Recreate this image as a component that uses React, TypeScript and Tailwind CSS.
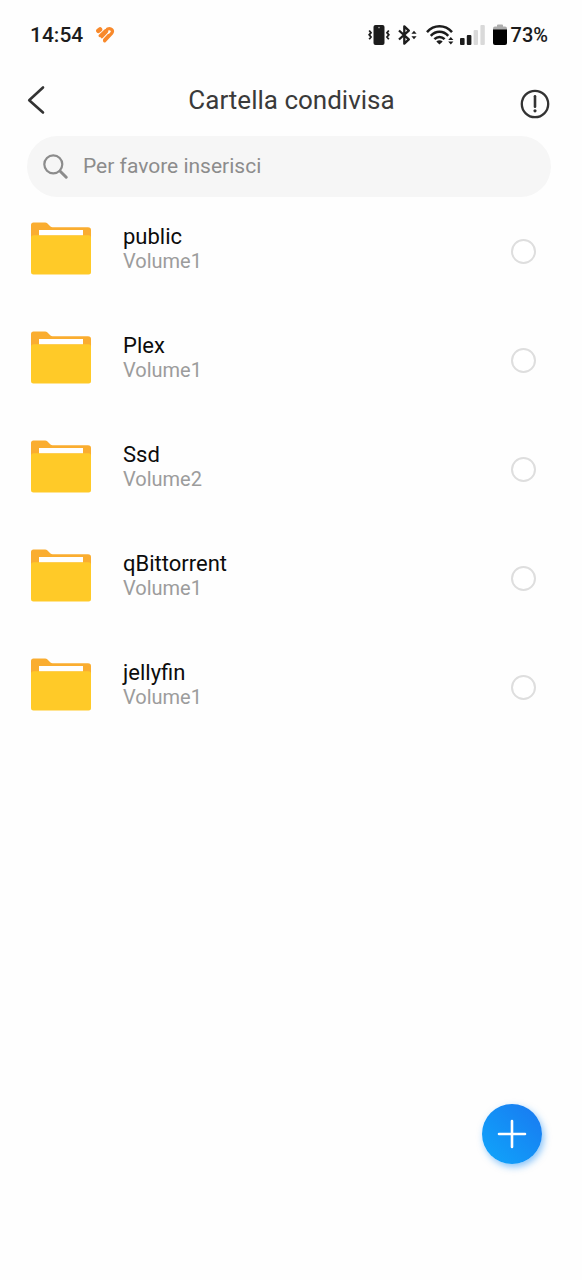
import React, { useState } from 'react';

interface SharedFolder {
  name: string;
  volume: string;
}

const FOLDERS: SharedFolder[] = [
  { name: 'public', volume: 'Volume1' },
  { name: 'Plex', volume: 'Volume1' },
  { name: 'Ssd', volume: 'Volume2' },
  { name: 'qBittorrent', volume: 'Volume1' },
  { name: 'jellyfin', volume: 'Volume1' },
];

const HeartIcon = () => (
  <svg className="w-5 h-4" viewBox="0 0 20 16" fill="none" stroke="#f8892b" strokeLinecap="round" strokeLinejoin="round">
    <path d="M3.4 3.8 L5 2.5" strokeWidth="4.6" />
    <path d="M4.8 8.8 L10.4 3.4 C11.4 2.6 12.6 3.8 11.8 4.8 L6.8 10" strokeWidth="2.6" />
    <path d="M12.6 2 C16.2 0.8 18.8 3.6 16.6 6.4 L9.6 13.8" strokeWidth="3.2" />
    <path d="M9.4 12.6 L13.6 8.2" strokeWidth="2.6" />
  </svg>
);

const VibrateIcon = () => (
  <svg className="w-[22px] h-5" viewBox="0 0 22 20" fill="none">
    <rect x="5.5" y="0" width="11" height="20" rx="2" fill="#1c1c1c" />
    <circle cx="11" cy="2.6" r="0.8" fill="#aaa" />
    <path d="M1.2 5.5 L3 7.7 L1.2 9.8 L3 12 L1.2 14.2 M20.8 5.5 L19 7.7 L20.8 9.8 L19 12 L20.8 14.2" stroke="#1c1c1c" strokeWidth="1.8" />
  </svg>
);

const BluetoothIcon = () => (
  <svg className="w-5 h-5" viewBox="0 0 20 20" fill="none">
    <path d="M1 5.5 L10.8 14.4 L6.3 18.6 V1.4 L10.8 5.6 L1 14.5" stroke="#1c1c1c" strokeWidth="2.3" strokeLinejoin="round" />
    <path d="M13.4 8.8 L16 5.8 L18.6 8.8 Z M13.4 11.2 H18.6 L16 14.2 Z" fill="#1c1c1c" />
  </svg>
);

const WifiIcon = () => (
  <svg className="w-7 h-5" viewBox="0 0 28 20" fill="none" stroke="#1c1c1c" strokeWidth="2.5">
    <path d="M1 7.2 C8 -0.6 19 -0.6 26 7.2" />
    <path d="M4.8 10.8 C9.8 5.4 17.2 5.4 22.2 10.8" />
    <path d="M8.4 14.2 C11.4 11.1 15.6 11.1 18.6 14.2" />
    <path d="M10.3 16.6 C12.2 14.8 14.8 14.8 16.7 16.6 L13.5 19.6 Z" fill="#1c1c1c" stroke="none" />
    <path d="M22.2 15 L24.8 12 L27.4 15 Z M22.2 16.6 H27.4 L24.8 19.6 Z" fill="#1c1c1c" stroke="none" />
  </svg>
);

const SignalIcon = () => (
  <svg className="w-[25px] h-5" viewBox="0 0 25 20">
    <rect x="0" y="13" width="4.6" height="7" rx="1" fill="#1c1c1c" />
    <rect x="6.8" y="10" width="4.6" height="10" rx="1" fill="#1c1c1c" />
    <rect x="13.6" y="5" width="4.4" height="15" rx="1" fill="#d9d9d9" />
    <rect x="20.4" y="0" width="4.4" height="20" rx="1" fill="#d9d9d9" />
  </svg>
);

const BatteryIcon = () => (
  <svg className="w-[14px] h-[22px]" viewBox="0 0 14 22">
    <path d="M4 2.5 V1.5 Q4 0.5 5 0.5 H9 Q10 0.5 10 1.5 V2.5 H12 Q14 2.5 14 4.5 V6 H0 V4.5 Q0 2.5 2 2.5 Z" fill="#adadad" />
    <path d="M0 5.5 H14 V19 Q14 21 12 21 H2 Q0 21 0 19 Z" fill="#000" />
  </svg>
);

const FolderIcon = () => (
  <svg className="w-[60px] h-[53px] shrink-0" viewBox="0 0 60 53">
    <path d="M0 3 Q0 0.5 2.5 0.5 H14 Q15.5 0.5 16.5 1.5 L19.5 4.5 Q20.3 5.2 21.5 5.2 H57 Q60 5.2 60 8 V30 H0 Z" fill="#faad30" />
    <path d="M0 16 Q0 13.2 2.5 13.2 H57.5 Q60 13.2 60 16 V50 Q60 52.5 57.5 52.5 H2.5 Q0 52.5 0 50 Z" fill="#ffca28" />
    <rect x="8" y="8" width="44" height="5.2" fill="#fff" />
  </svg>
);

const StatusBar = () => (
  <div className="flex items-center h-[70px] pl-[30px] pr-[34px] text-[#1c1c1c]">
    <span className="text-[21px] leading-6 font-medium">14:54</span>
    <div className="ml-3">
      <HeartIcon />
    </div>
    <div className="flex items-center ml-auto">
      <VibrateIcon />
      <div className="ml-2"><BluetoothIcon /></div>
      <div className="ml-2"><WifiIcon /></div>
      <div className="ml-1.5"><SignalIcon /></div>
      <div className="ml-2"><BatteryIcon /></div>
      <span className="ml-1 text-[20px] leading-6 font-medium">73%</span>
    </div>
  </div>
);

interface FolderRowProps {
  folder: SharedFolder;
  selected: boolean;
  onSelect: (name: string) => void;
}

const FolderRow: React.FC<FolderRowProps> = ({ folder, selected, onSelect }) => (
  <li>
    <label className="flex items-center h-[109px] pl-[31px] pr-[46px] cursor-pointer">
      <span className="flex items-center grow pb-1.5">
        <FolderIcon />
        <span className="flex flex-col ml-8">
          <span className="text-[22px] leading-[25px] text-[#0c0c0c]">{folder.name}</span>
          <span className="text-[20px] leading-[25px] text-[#9c9c9c]">{folder.volume}</span>
        </span>
      </span>
      <input
        type="radio"
        name="folder"
        checked={selected}
        onChange={() => onSelect(folder.name)}
        className="appearance-none w-[25px] h-[25px] shrink-0 rounded-full border-2 border-[#dedede] bg-white checked:border-[7px] checked:border-[#168bf5]"
      />
    </label>
  </li>
);

const App: React.FC = () => {
  const [query, setQuery] = useState('');
  const [selected, setSelected] = useState<string | null>(null);

  const visible = FOLDERS.filter(f => f.name.toLowerCase().includes(query.toLowerCase()));

  return (
    <div className="min-h-screen bg-[#fefefe] font-[Roboto,sans-serif]">
      <StatusBar />
      <header className="flex items-center justify-between h-[66px] pb-1.5 pl-[27px] pr-8">
        <button type="button" aria-label="Indietro" className="w-9 h-8">
          <svg className="w-5 h-8" viewBox="0 0 20 32" fill="none" stroke="#333" strokeWidth="2.6" strokeLinecap="round" strokeLinejoin="round">
            <path d="M16 3.5 L2.2 16.2 L16 28.5" />
          </svg>
        </button>
        <h1 className="text-[26px] leading-8 text-[#3a3a3a]">Cartella condivisa</h1>
        <button type="button" aria-label="Informazioni" className="pt-2">
          <svg className="w-[30px] h-[30px]" viewBox="0 0 30 30" fill="none" stroke="#333">
            <circle cx="15" cy="15" r="13.2" strokeWidth="2.3" />
            <path d="M15 7.2 V17.8" strokeWidth="2.6" strokeLinecap="round" />
            <circle cx="15" cy="21.8" r="1.6" fill="#333" stroke="none" />
          </svg>
        </button>
      </header>
      <label className="flex items-center h-[61px] ml-[27px] mr-[31px] pl-4 pr-6 rounded-full bg-[#f6f6f6]">
        <svg className="w-[25px] h-[25px] shrink-0" viewBox="0 0 25 25" fill="none" stroke="#8c8c8c" strokeLinecap="round">
          <circle cx="10.3" cy="10.3" r="9" strokeWidth="2.2" />
          <path d="M17.2 17.2 L23.2 23.2" strokeWidth="3" />
        </svg>
        <input
          type="text"
          aria-label="Cerca cartella"
          placeholder="Per favore inserisci"
          value={query}
          onChange={e => setQuery(e.target.value)}
          className="grow min-w-0 ml-[15px] pb-0.5 text-[21px] leading-6 text-[#333] placeholder:text-[#8c8c8c] bg-transparent outline-none"
        />
      </label>
      <ul>
        {visible.map(folder => (
          <FolderRow key={folder.name} folder={folder} selected={selected === folder.name} onSelect={setSelected} />
        ))}
      </ul>
      <button
        type="button"
        aria-label="Aggiungi cartella"
        className="fixed right-10 bottom-[116px] flex items-center justify-center w-[60px] h-[60px] rounded-full bg-linear-to-tr from-[#10a6fb] to-[#1a78f0] shadow-[2px_3px_7px_rgba(22,139,245,0.5)]"
      >
        <svg className="w-[30px] h-[30px]" viewBox="0 0 30 30" fill="none" stroke="#fff" strokeWidth="2.6" strokeLinecap="round">
          <path d="M15 2 V28 M2 15 H28" />
        </svg>
      </button>
    </div>
  );
};

export default App;
